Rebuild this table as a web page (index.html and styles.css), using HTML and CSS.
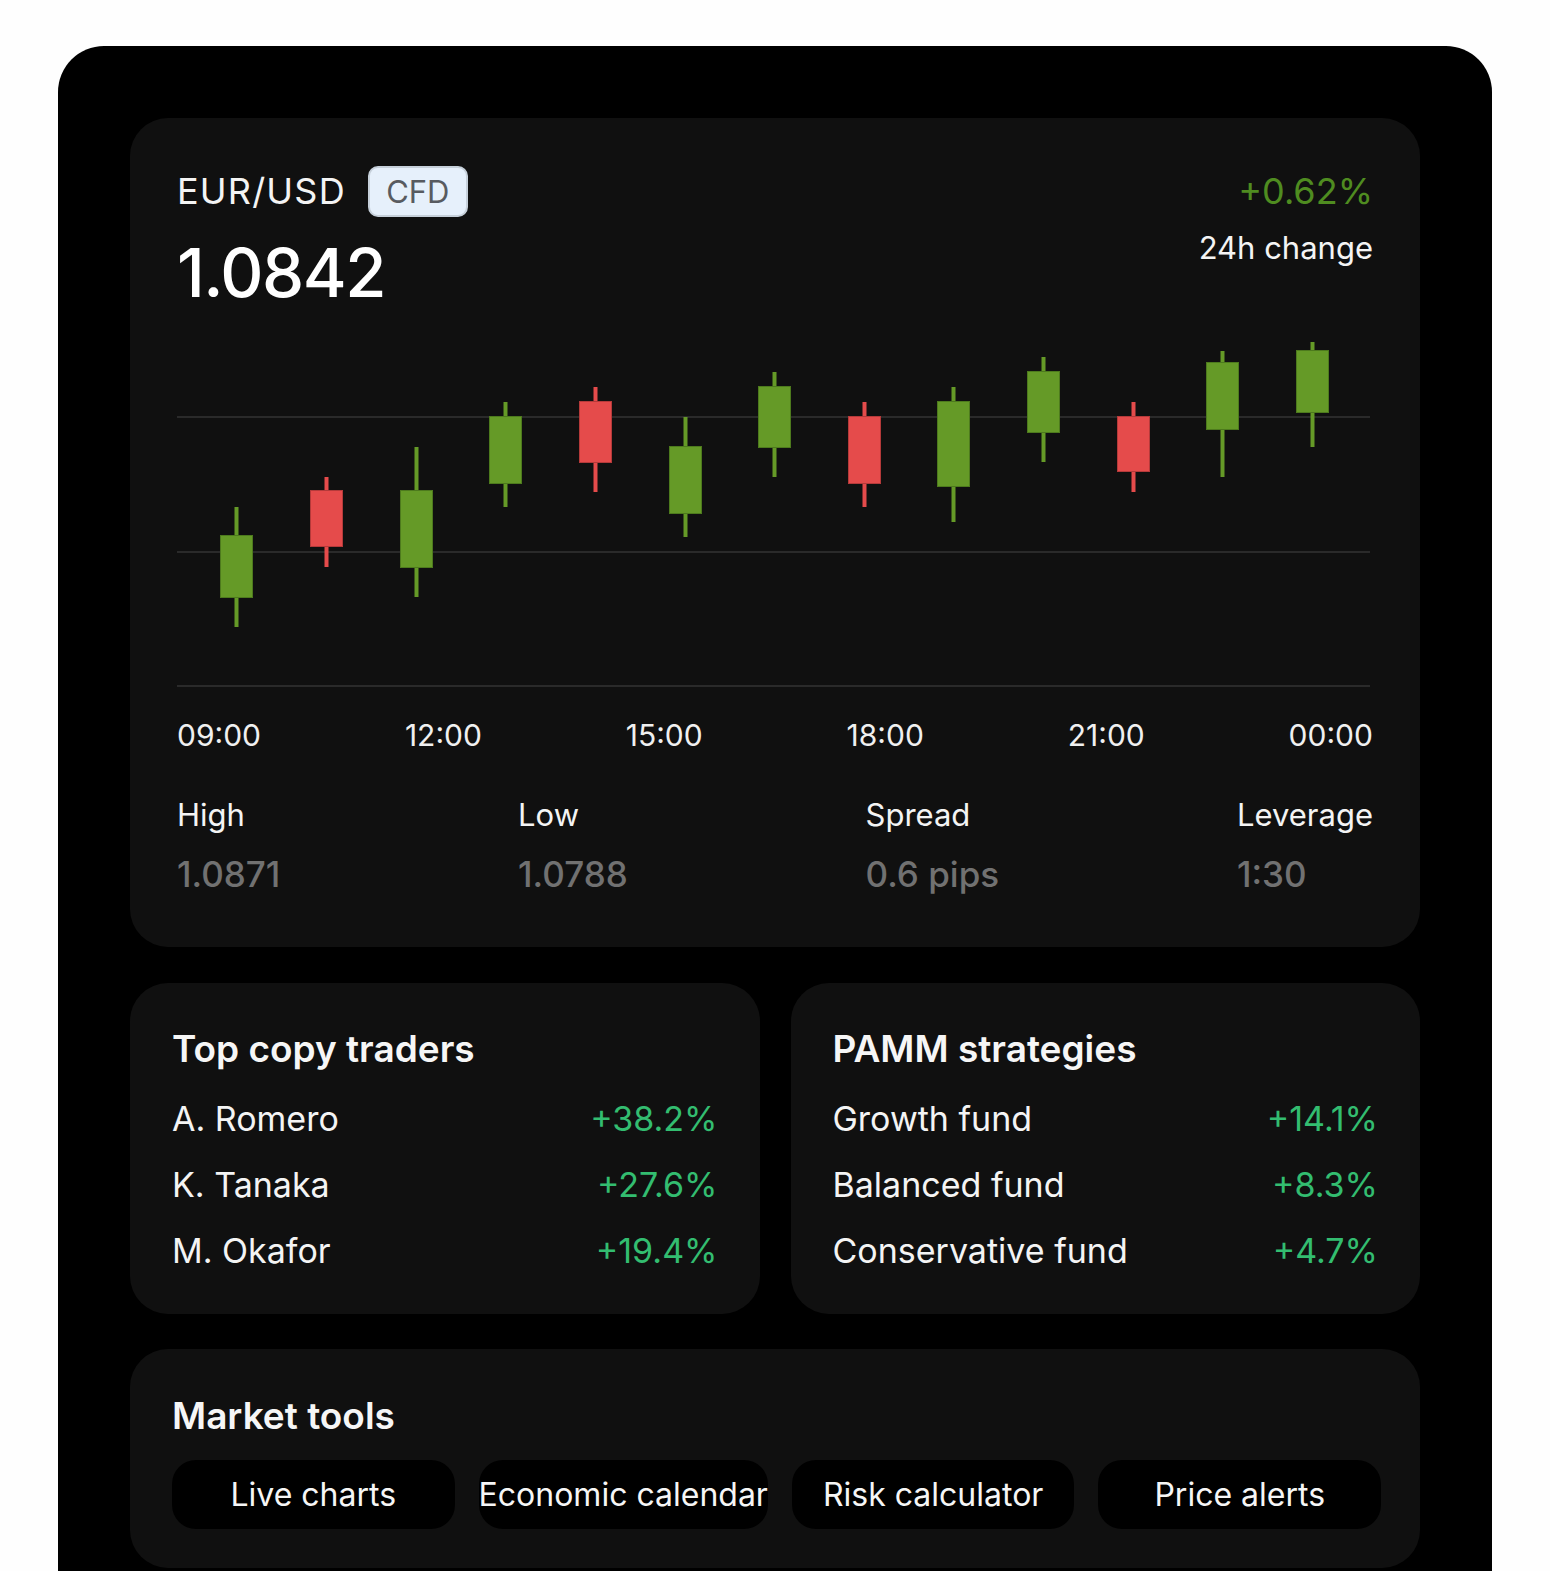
FILE: index.html
```html
<!DOCTYPE html>
<html lang="en">
<head>
<meta charset="utf-8">
<title>EUR/USD</title>
<link rel="stylesheet" href="styles.css">
</head>
<body>
<div class="frame">
  <section class="card main">
    <div class="head">
      <div class="head-left">
        <div class="pair-row">
          <span class="pair">EUR/USD</span>
          <span class="badge">CFD</span>
        </div>
        <div class="price">1.0842</div>
      </div>
      <div class="head-right">
        <div class="change">+0.62%</div>
        <div class="change-label">24h change</div>
      </div>
    </div>
    <svg class="chart" width="1193" height="360" viewBox="177 330 1193 360">
      <g class="grid">
        <line x1="177" y1="417" x2="1370" y2="417"/>
        <line x1="177" y1="552" x2="1370" y2="552"/>
        <line x1="177" y1="686" x2="1370" y2="686"/>
      </g>
      <g class="up">
        <rect class="wick" x="234.5" y="507" width="4" height="120"/><rect class="body" x="220.5" y="535.5" width="32" height="62"/>
        <rect class="wick" x="414.5" y="447" width="4" height="150"/><rect class="body" x="400.5" y="490.5" width="32" height="77"/>
        <rect class="wick" x="503.5" y="402" width="4" height="105"/><rect class="body" x="489.5" y="416.5" width="32" height="67"/>
        <rect class="wick" x="683.5" y="417" width="4" height="120"/><rect class="body" x="669.5" y="446.5" width="32" height="67"/>
        <rect class="wick" x="772.5" y="372" width="4" height="105"/><rect class="body" x="758.5" y="386.5" width="32" height="61"/>
        <rect class="wick" x="951.5" y="387" width="4" height="135"/><rect class="body" x="937.5" y="401.5" width="32" height="85"/>
        <rect class="wick" x="1041.5" y="357" width="4" height="105"/><rect class="body" x="1027.5" y="371.5" width="32" height="61"/>
        <rect class="wick" x="1220.5" y="351" width="4" height="126"/><rect class="body" x="1206.5" y="362.5" width="32" height="67"/>
        <rect class="wick" x="1310.5" y="342" width="4" height="105"/><rect class="body" x="1296.5" y="350.5" width="32" height="62"/>
      </g>
      <g class="down">
        <rect class="wick" x="324.5" y="477" width="4" height="90"/><rect class="body" x="310.5" y="490.5" width="32" height="56"/>
        <rect class="wick" x="593.5" y="387" width="4" height="105"/><rect class="body" x="579.5" y="401.5" width="32" height="61"/>
        <rect class="wick" x="862.5" y="402" width="4" height="105"/><rect class="body" x="848.5" y="416.5" width="32" height="67"/>
        <rect class="wick" x="1131.5" y="402" width="4" height="90"/><rect class="body" x="1117.5" y="416.5" width="32" height="55"/>
      </g>
    </svg>
    <div class="axis">
      <span>09:00</span><span>12:00</span><span>15:00</span><span>18:00</span><span>21:00</span><span>00:00</span>
    </div>
    <div class="stats">
      <div class="stat"><div class="stat-label">High</div><div class="stat-value">1.0871</div></div>
      <div class="stat"><div class="stat-label">Low</div><div class="stat-value">1.0788</div></div>
      <div class="stat"><div class="stat-label">Spread</div><div class="stat-value">0.6 pips</div></div>
      <div class="stat"><div class="stat-label">Leverage</div><div class="stat-value">1:30</div></div>
    </div>
  </section>

  <div class="pair-cards">
    <section class="card list-card">
      <h2 class="card-title">Top copy traders</h2>
      <ul class="rows">
        <li><span>A. Romero</span><span class="gain">+38.2%</span></li>
        <li><span>K. Tanaka</span><span class="gain">+27.6%</span></li>
        <li><span>M. Okafor</span><span class="gain">+19.4%</span></li>
      </ul>
    </section>
    <section class="card list-card">
      <h2 class="card-title">PAMM strategies</h2>
      <ul class="rows">
        <li><span>Growth fund</span><span class="gain">+14.1%</span></li>
        <li><span>Balanced fund</span><span class="gain">+8.3%</span></li>
        <li><span>Conservative fund</span><span class="gain">+4.7%</span></li>
      </ul>
    </section>
  </div>

  <section class="card tools">
    <h2 class="card-title">Market tools</h2>
    <div class="tool-grid">
      <button class="tool">Live charts</button>
      <button class="tool">Economic calendar</button>
      <button class="tool">Risk calculator</button>
      <button class="tool">Price alerts</button>
    </div>
  </section>
</div>
</body>
</html>
```

FILE: styles.css
```css
* { box-sizing: border-box; }

html, body {
  margin: 0;
  padding: 0;
  background: #fefefe;
}

body {
  font-family: Inter, "Noto Sans", "Liberation Sans", sans-serif;
  color: #f4f4f4;
  padding: 46px 58px 0 58px;
  height: 1571px;
  overflow: hidden;
}

.frame {
  background: #000;
  border-radius: 46px 46px 0 0;
  padding: 72px 72px 40px;
  min-height: 1600px;
}

.card {
  background: #101010;
  border-radius: 38px;
}

.main {
  padding: 48px 47px 52px;
}

.head {
  display: flex;
  justify-content: space-between;
  align-items: flex-start;
}

.pair-row {
  display: flex;
  align-items: center;
  gap: 22px;
  height: 51px;
}

.pair {
  font-size: 36px;
  line-height: 43px;
  font-weight: 400;
  letter-spacing: 1.2px;
}

.badge {
  display: inline-flex;
  align-items: center;
  justify-content: center;
  width: 100px;
  height: 51px;
  background: #e6f0fb;
  border: 2px solid #c6d0da;
  border-radius: 10px;
  color: #585b60;
  font-size: 31px;
  font-weight: 400;
}

.price {
  margin-top: 22px;
  font-size: 67px;
  line-height: 68px;
  font-weight: 500;
  letter-spacing: -1.5px;
  color: #fff;
}

.head-right {
  text-align: right;
  padding-top: 4px;
}

.change {
  font-size: 36px;
  line-height: 43px;
  color: #4f8c20;
  font-weight: 400;
}

.change-label {
  margin-top: 16px;
  font-size: 31px;
  line-height: 37px;
  color: #f4f4f4;
}

.chart {
  display: block;
  margin-top: 23px;
}

.grid line {
  stroke: #333;
  stroke-width: 1.5;
}

.up .wick, .up .body { fill: #659a27; }
.up .body { stroke: #4d7a1d; stroke-width: 1; }
.down .wick, .down .body { fill: #e54b4b; }
.down .body { stroke: #b53a3a; stroke-width: 1; }

.axis {
  display: flex;
  justify-content: space-between;
  margin-top: 27px;
  font-size: 30px;
  line-height: 36px;
  color: #f0f0f0;
}

.stats {
  display: flex;
  justify-content: space-between;
  margin-top: 43px;
}

.stat-label {
  font-size: 31px;
  line-height: 37px;
  color: #f4f4f4;
}

.stat-value {
  margin-top: 20px;
  font-size: 35px;
  line-height: 42px;
  font-weight: 500;
  color: #717171;
}

.pair-cards {
  display: grid;
  grid-template-columns: 1fr 1fr;
  gap: 31px;
  margin-top: 36px;
}

.list-card {
  padding: 45px 42px 30px;
}

.card-title {
  margin: 0;
  font-size: 37px;
  line-height: 42px;
  font-weight: 600;
  color: #f6f6f6;
  letter-spacing: 0;
}

.rows {
  list-style: none;
  margin: 16px 0 0;
  padding: 0;
}

.rows li {
  display: flex;
  justify-content: space-between;
  font-size: 34px;
  line-height: 66px;
  color: #f4f4f4;
}

.gain {
  color: #33bd70;
}

.tools {
  margin-top: 35px;
  padding: 46px 39px 39px 42px;
}

.tool-grid {
  display: grid;
  grid-template-columns: repeat(4, 1fr);
  gap: 24px;
  margin-top: 23px;
}

.tool {
  height: 69px;
  border: 0;
  border-radius: 24px;
  background: #000;
  color: #f6f6f6;
  font-family: inherit;
  font-size: 32px;
  white-space: nowrap;
  padding: 0;
  overflow: visible;
}
```
